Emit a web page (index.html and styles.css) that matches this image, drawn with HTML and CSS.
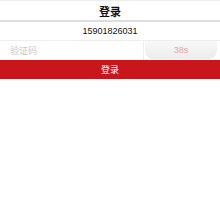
FILE: index.html
```html
<!DOCTYPE html>
<html lang="zh-CN">
<head>
    <meta charset="UTF-8">
    <meta name="viewport" content="width=device-width, initial-scale=1.0">
    <title>登录</title>
    <link rel="stylesheet" href="styles.css">
</head>
<body>

<!-- Header -->
<div class="header">
    <h1>登录</h1>
</div>

<!-- Form Login -->
<form class="login-form">
    <div class="row phone-row">
        <input type="text" class="phone" value="15901826031">
    </div>
    <div class="row code-row">
        <input type="text" class="code" placeholder="验证码">
        <div class="code-btn">38s</div>
    </div>
    <button type="button" class="submit-btn">登录</button>
</form>

</body>
</html>
```

FILE: styles.css
```css
/* Desain Dasar */
body {
    font-family: "Liberation Sans", Arial, "Noto Sans CJK SC", sans-serif;
    margin: 0;
    padding: 0;
    background-color: #ffffff;
}

/* Header */
.header {
    border-top: 1px solid #eeeeee;
    border-bottom: 2px solid #dddddd;
    height: 19px;
    display: flex;
    justify-content: center;
    align-items: center;
}

.header h1 {
    margin: 0;
    font-size: 11px;
    font-weight: bold;
    color: #111111;
}

/* Form */
.login-form {
    display: flex;
    flex-direction: column;
}

.row {
    display: flex;
    border-bottom: 1px solid #eeeeee;
}

.phone-row {
    height: 18px;
}

.phone {
    flex: 1;
    border: none;
    padding: 0;
    text-align: center;
    font-size: 9px;
    color: #111111;
    font-family: inherit;
    background: transparent;
}

.code-row {
    height: 19px;
    border-bottom: none;
}

.code {
    flex: 1;
    border: none;
    border-right: 1px solid #eeeeee;
    padding: 0 0 0 10px;
    font-size: 9px;
    font-family: inherit;
    background: transparent;
}

.code::placeholder {
    color: #c8c8c8;
}

.code-btn {
    width: 72px;
    margin: 0 3px 1px 1px;
    display: flex;
    justify-content: center;
    align-items: center;
    font-size: 9px;
    color: #eaa4aa;
    background: linear-gradient(#f8f8f8, #ececec);
    border-radius: 0 0 8px 8px;
}

.submit-btn {
    height: 19px;
    border: none;
    padding: 0;
    background-color: #c9161d;
    color: #ffffff;
    font-size: 9px;
    font-family: inherit;
}
```
